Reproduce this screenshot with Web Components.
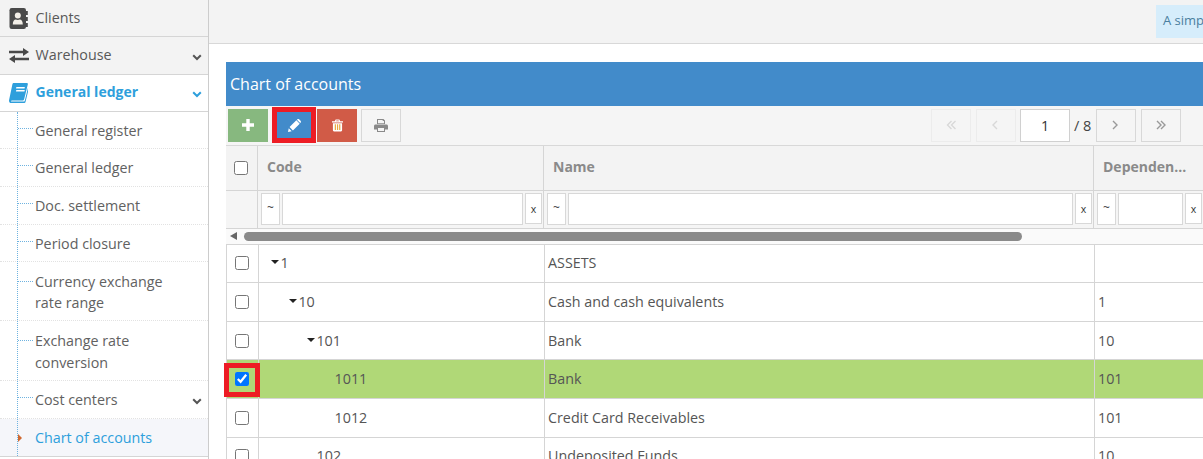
<!DOCTYPE html>
<html lang="en"><head><meta charset="utf-8"><title>Chart of accounts</title>
<style>
html,body{margin:0;height:459px;overflow:hidden;background:#fff;font:14.3px/21px "Open Sans",sans-serif;color:#555}
</style></head><body>
<app-shell>
  <side-nav slot="nav">
    <nav-item icon="contacts">Clients</nav-item>
    <nav-item icon="exchange" chevron>Warehouse</nav-item>
    <nav-item icon="book" chevron active>General ledger</nav-item>
    <sub-list>
      <sub-item h="37.4">General register</sub-item>
      <sub-item h="37.6">General ledger</sub-item>
      <sub-item h="37.6">Doc. settlement</sub-item>
      <sub-item h="37.4">Period closure</sub-item>
      <sub-item tall>Currency exchange<br>rate range</sub-item>
      <sub-item tall>Exchange rate<br>conversion</sub-item>
      <sub-item h="38" chevron>Cost centers</sub-item>
      <sub-item h="37" current>Chart of accounts</sub-item>
    </sub-list>
  </side-nav>
  <top-bar slot="top">A simple</top-bar>
  <grid-panel slot="main" heading="Chart of accounts">
    <grid-toolbar></grid-toolbar>
    <grid-head></grid-head>
    <grid-filters></grid-filters>
    <grid-scroll></grid-scroll>
    <grid-row level="0" arrow code="1" name="ASSETS"></grid-row>
    <grid-row level="1" arrow code="10" name="Cash and cash equivalents" dep="1"></grid-row>
    <grid-row level="2" arrow code="101" name="Bank" dep="10"></grid-row>
    <grid-row level="3" code="1011" name="Bank" dep="101" selected></grid-row>
    <grid-row level="3" code="1012" name="Credit Card Receivables" dep="101"></grid-row>
    <grid-row level="2" code="102" name="Undeposited Funds" dep="10"></grid-row>
  </grid-panel>
</app-shell>
<script>
const ICONS={
 contacts:'<svg width="19" height="21" viewBox="0 0 19 21"><rect x="0.5" y="0" width="16.5" height="21" rx="2.2" fill="#4a4a4a"/><rect x="17" y="3" width="1.8" height="4" fill="#4a4a4a"/><rect x="17" y="9" width="1.8" height="4" fill="#4a4a4a"/><rect x="17" y="15" width="1.8" height="4" fill="#4a4a4a"/><circle cx="8.8" cy="7.6" r="3" fill="#f3efe8"/><path d="M3.800 16.500c0-3.400 1.400-5 3-5 1 .6 3 .6 4 0 1.600 0 3 1.600 3 5z" fill="#f3efe8"/></svg>',
 exchange:'<svg width="20" height="15" viewBox="0 0 20 15" fill="#4a4a4a"><path d="M0 2.800h14V0l6 4-6 4V5.200H0z"/><path d="M20 9.800H6V7l-6 4 6 4v-2.800h14z"/></svg>',
 book:'<svg width="19" height="20" viewBox="0 0 19 20"><path fill="#2e9fdc" d="M4.800 0H18c.8 0 1 .7.800 1.400L15.200 16c-.3 1-.9 1.500-2 1.500H2.900c-.7 0-1 .6-.8 1.100h12.500c.6 0 1-.3 1.200-.9l3.400-13.700.8.500-3.500 14.500c-.2.700-.8 1-1.500 1H2.200C.7 20-.3 18.500.1 17L3.400 1.300C3.600.5 4.100 0 4.800 0z"/><rect x="7" y="4" width="8.500" height="1.500" fill="#fff" transform="skewX(-12) translate(1.200 0)"/><rect x="7" y="7" width="8.500" height="1.500" fill="#fff" transform="skewX(-12) translate(1.800 0)"/></svg>',
 plus:'<svg width="12" height="12" viewBox="0 0 12 12" fill="#fff"><path d="M4.300 0h3.400v4.300H12v3.400H7.700V12H4.300V7.700H0V4.300h4.300z"/></svg>',
 pencil:'<svg width="13" height="13" viewBox="0 0 14 14" fill="#fff"><path d="M0 14l.8-4 3.200 3.200zM1.700 8.700L9 1.400l3.600 3.600-7.300 7.300zM9.900.600c.7-.7 1.700-.7 2.300 0l1.300 1.300c.6.600.6 1.600 0 2.200l-.3.300L9.600.900z"/></svg>',
 trash:'<svg width="11" height="13" viewBox="0 0 12 13"><path fill="#fff" d="M4 0h4l1 1.800h3v1.400H0V1.800h3zM4.800 1L4.400 1.800h3.200L7.200 1z"/><path fill="#fff" d="M1 4h10v7.800c0 .7-.5 1.200-1.200 1.200H2.200C1.500 13 1 12.500 1 11.800z"/><path fill="#e8a93c" d="M3 5h1.300v6.500H3zM5.400 5h1.300v6.500H5.400zM7.800 5h1.300v6.500H7.800z"/></svg>',
 print:'<svg width="14" height="13" viewBox="0 0 14 13" fill="#8a8a8a"><path d="M3 0h6.500L11 1.500V5H3zM4 1v3.200h6V2H8.700V1z" fill-rule="evenodd"/><path fill-rule="evenodd" d="M1.500 5.500h11c.8 0 1.500.7 1.500 1.500v3.500h-3V13H3v-2.500H0V7c0-.8.700-1.500 1.500-1.500zM4 9v3h6V9z"/></svg>',
 chev:c=>`<svg width="10" height="7" viewBox="0 0 10 7"><path d="M1.200 1.200L5 5l3.800-3.800" fill="none" stroke="${c}" stroke-width="2"/></svg>`,
 pg:{first:'M5.500 1L1.500 5l4 4M9.500 1l-4 4 4 4',prev:'M6 1L2 5l4 4',next:'M2 1l4 4-4 4',last:'M1 1l4 4-4 4M5 1l4 4-4 4'}
};
const def=(name,html)=>customElements.define(name,class extends HTMLElement{
  constructor(){super();this.attachShadow({mode:'open'})}
  connectedCallback(){this.shadowRoot.innerHTML=typeof html==='function'?html(this):html;}
});
def('app-shell',`<style>
:host{display:grid;grid-template-columns:209px 1fr;grid-template-rows:44px 1fr;width:1203px;height:459px;overflow:hidden}
.nav{grid-row:1/3}
</style><div class="nav"><slot name="nav"></slot></div><slot name="top"></slot><slot name="main"></slot>`);
def('side-nav',`<style>
:host{display:block;height:459px;box-sizing:border-box;border-right:1px solid #ccc;background:#fff}
</style><slot></slot>`);
def('nav-item',h=>{const act=h.hasAttribute('active');return `<style>
:host{display:flex;align-items:center;box-sizing:border-box;height:${act?37:38}px;padding:0 6px 0 9px;border-bottom:1px solid #d5d5d5;
 background:${act?'#fff':'#f3f3f3'};color:${act?'#2e9fdc':'#585858'};font-weight:${act?700:400};font-size:${act?14:14.3}px}
:host(:first-child){height:37px}
.i{width:26.500px;display:flex;align-items:center;flex:none}
.t{flex:1;margin-top:${act?-3:-2}px}
.c{display:flex;margin:3px 0 0}
</style><span class="i">${ICONS[h.getAttribute('icon')]}</span><span class="t"><slot></slot></span>${h.hasAttribute('chevron')?`<span class="c">${ICONS.chev(act?'#2e9fdc':'#555')}</span>`:''}`});
def('sub-list',`<style>
:host{display:block;position:relative;border-bottom:1px solid #d5d5d5}
.v{position:absolute;left:17px;top:0;bottom:0;border-left:1px dotted #6fb3e0}
</style><slot></slot><span class="v"></span>`);
def('sub-item',h=>{const tall=h.hasAttribute('tall'),cur=h.hasAttribute('current');return `<style>
:host{display:flex;align-items:flex-start;box-sizing:border-box;height:${h.getAttribute('h')||(tall?59.5:37.5)}px;padding:${tall?8.6:8}px 6px 0 35px;position:relative;line-height:${tall?21.5:21}px;
 border-bottom:${cur?'0':'1px dotted #e2e2e2'};background:${cur?'#f5f6fa':'#fff'};color:${cur?'#2e9fdc':'#616161'}}
:host::before{content:"";position:absolute;left:18px;width:15px;top:${tall?19:16}px;border-top:1px dotted #6fb3e0;${cur?'display:none':''}}
.t{flex:1}.c{display:flex;margin-top:9px}
.m{position:absolute;left:18px;top:15px;width:0;height:0;border-left:4.500px solid #d0682f;border-top:4.500px solid transparent;border-bottom:4.500px solid transparent}
</style>${cur?'<span class="m"></span>':''}<span class="t"><slot></slot></span>${h.hasAttribute('chevron')?`<span class="c">${ICONS.chev('#555')}</span>`:''}`});
def('top-bar',`<style>
:host{display:flex;justify-content:flex-end;box-sizing:border-box;height:44px;padding-top:5px;background:#f3f3f3;border-bottom:1px solid #d8d8d8;overflow:hidden;font-size:13px;color:#4b7f9f}
.b{box-sizing:border-box;width:47px;height:33px;padding:5px 0 0 7px;background:#d6edfb;white-space:nowrap;overflow:hidden;line-height:21px}
</style><div class="b"><slot></slot></div>`);
def('grid-panel',h=>`<style>
:host{display:block;padding:18px 0 0 17px;overflow:hidden;min-width:0}
.h{box-sizing:border-box;height:44px;padding:11px 0 0 4px;background:#428bca;color:#fff;font-size:16px;line-height:22px}
</style><div class="h">${h.getAttribute('heading')}</div><slot></slot>`);
const btn=(bg,icon)=>`<span class="b" style="background:${bg}">${icon}</span>`;
const pg=(k,faded,st='')=>`<span class="b p${faded?' f':''}" style="${st}"><svg width="11" height="10" viewBox="0 0 11 10"><path d="${ICONS.pg[k]}" fill="none" stroke="${faded?'#d8d8d8':'#999'}" stroke-width="1.400"/></svg></span>`;
def('grid-toolbar',`<style>
:host{display:flex;align-items:center;box-sizing:border-box;height:40px;padding:2px 22px 3px 2px;background:#f5f5f5;border-bottom:1px solid #d8d8d8}
.b{display:flex;align-items:center;justify-content:center;box-sizing:border-box;width:40px;height:33px;flex:none;margin-right:4px}
.edit{box-sizing:border-box;width:44px;height:36px;border:5px solid #ed1c24;margin-right:1px;background:#428bca;display:flex;align-items:center;justify-content:center;flex:none}
.g{background:#f5f5f5;border:1px solid #d8d8d8}
.p{background:#f5f5f5;border:1px solid #d8d8d8}
.f{border-color:#ececec}
.sp{flex:1}
.n{box-sizing:border-box;width:50px;height:33px;background:#fff;border:1px solid #d0d0d0;text-align:center;line-height:31px;color:#333;flex:none}
.o{width:26px;flex:none;text-align:left;padding-left:4px;box-sizing:border-box;color:#444;font-size:14.5px}
</style>${btn('#87b87f',ICONS.plus)}<span class="edit">${ICONS.pencil}</span>${btn('#d15b47',ICONS.trash)}<span class="b g">${ICONS.print}</span><span class="sp"></span>${pg('first',1,'margin-right:5px')}${pg('prev',1)}<span class="n">1</span><span class="o">/ 8</span>${pg('next',0,'margin-right:5px')}${pg('last',0,'margin-right:0')}`);
const cols='32px 286px 550px 1fr';
def('grid-head',`<style>
:host{display:grid;grid-template-columns:${cols};box-sizing:border-box;height:45px;background:#f3f3f3;border-bottom:1px solid #d5d5d5;font-weight:700;font-size:14px;color:#8a8a8a}
div{display:flex;align-items:center;box-sizing:border-box;border-right:1px solid #d5d5d5;padding-left:9px;padding-bottom:4px}
div:first-of-type{padding-left:8px;padding-bottom:0}
input{margin:0;width:14px;height:14px}
</style><div><input type="checkbox" aria-label="Select all"></div><div>Code</div><div>Name</div><div style="border:0">Dependen...</div>`);
const fc=(w)=>`<span class="b">~</span><span class="i" style="width:${w}px"></span><span class="b x">x</span>`;
def('grid-filters',`<style>
:host{display:grid;grid-template-columns:${cols};box-sizing:border-box;height:38px;background:#f5f5f5;border-bottom:1px solid #d5d5d5}
div{display:flex;align-items:flex-start;box-sizing:border-box;border-right:1px solid #d5d5d5;padding:2px 0 0 3px;gap:2px;overflow:hidden}
span{box-sizing:border-box;height:32px;background:#fff;border:1px solid #d8d8d8;flex:none;display:block}
.b{width:19px;text-align:center;line-height:28px;font-size:12px;color:#444}
.x{width:17px;height:31px;line-height:31px;font-size:10.500px;color:#333}
</style><div></div><div>${fc(241)}</div><div>${fc(505)}</div><div style="border:0">${fc(65)}</div>`);
def('grid-scroll',`<style>
:host{display:flex;align-items:center;box-sizing:border-box;height:15.600px;background:#fafafa;border-bottom:1px solid #d5d5d5;padding-left:4px}
i{width:0;height:0;border-right:7px solid #666;border-top:4.500px solid transparent;border-bottom:4.500px solid transparent}
b{display:block;width:778px;height:9px;border-radius:5px;background:#8a8a8a;margin-left:7px}
</style><i></i><b></b>`);
def('grid-row',h=>{
 const a=k=>h.getAttribute(k)||'',sel=h.hasAttribute('selected'),lv=+a('level');
 const pad=(h.hasAttribute('arrow')?12:21.6)+18*lv;
 return `<style>
:host{display:grid;grid-template-columns:32px 286px 550px 1fr;box-sizing:border-box;height:38.600px;background:${sel?'#b0d877':'#fff'};border-bottom:1px solid #d5d5d5;border-left:1px solid #d5d5d5;color:#555}
div{display:flex;align-items:center;box-sizing:border-box;border-right:1px solid #d5d5d5;padding-left:3px;padding-bottom:1px;white-space:nowrap}
div:first-of-type{justify-content:center;padding:0 1px 0 0;position:relative}
div:last-child{border:0}
input{margin:0;width:14px;height:14px}
.t{padding-left:${pad}px}
.a{width:0;height:0;border-top:4.500px solid #222;border-left:4.500px solid transparent;border-right:4.500px solid transparent;margin-right:1.400px;margin-top:-1px}
.mark{position:absolute;left:-3px;top:3px;width:36px;height:34px;box-sizing:border-box;border:5px solid #ed1c24}
</style><div><input type="checkbox" aria-label="Select row" ${sel?'checked':''}>${sel?'<span class="mark"></span>':''}</div><div class="t">${h.hasAttribute('arrow')?'<span class="a"></span>':''}${a('code')}</div><div>${a('name')}</div><div>${a('dep')}</div>`});
</script>
</body></html>
